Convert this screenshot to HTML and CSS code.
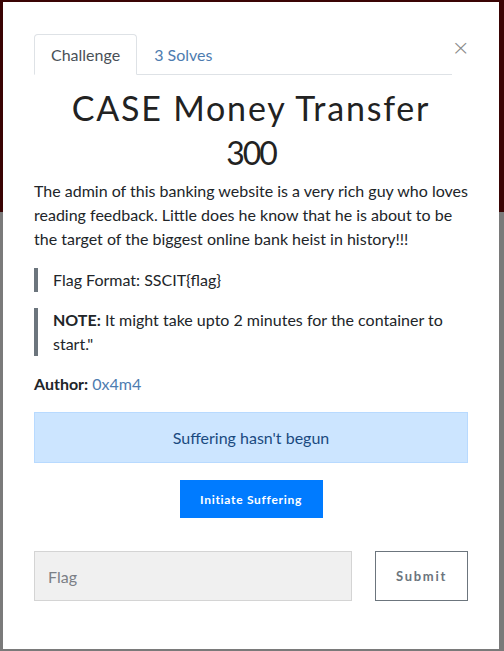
FILE: index.html
```html
<!DOCTYPE html>
<html>
<head>
<meta charset="utf-8">
<link rel="stylesheet" href="styles.css">
</head>
<body>
<div class="modal">
  <div class="header">
    <ul class="tabs">
      <li class="tab active">Challenge</li>
      <li class="tab">3 Solves</li>
    </ul>
    <span class="close">&times;</span>
  </div>
  <h2 class="title">CASE Money Transfer</h2>
  <h3 class="value">300</h3>
  <p class="desc">The admin of this banking website is a very rich guy who loves reading feedback. Little does he know that he is about to be the target of the biggest online bank heist in history!!!</p>
  <blockquote class="quote">Flag Format: SSCIT{flag}</blockquote>
  <blockquote class="quote"><strong>NOTE:</strong> It might take upto 2 minutes for the container to start."</blockquote>
  <p class="author"><strong>Author:</strong> <a class="link">0x4m4</a></p>
  <div class="alert">Suffering hasn't begun</div>
  <div class="btn-row"><button class="btn-primary">Initiate Suffering</button></div>
  <div class="submit-row">
    <input class="flag" type="text" placeholder="Flag">
    <button class="btn-submit">Submit</button>
  </div>
</div>
</body>
</html>
```
FILE: styles.css
```css
html, body { margin: 0; padding: 0; }
body {
  height: 651px;
  overflow: hidden;
  background: linear-gradient(#3a0404 0, #3a0404 212px, #7a7a7a 212px);
  font-family: Lato, "Liberation Sans", sans-serif;
  color: #212529;
}
.modal {
  margin: 2px 5px 0 3px;
  height: 647px;
  box-sizing: border-box;
  background: #fff;
  padding: 32px 31px 0 31px;
}
.header {
  display: flex;
  align-items: flex-start;
}
.tabs {
  list-style: none;
  margin: 0;
  padding: 0;
  display: flex;
  width: 419px;
  border-bottom: 1px solid #dee2e6;
}
.tab {
  font-size: 16px;
  line-height: 23px;
  padding: 8px 16px 8px 16px;
  border: 1px solid transparent;
  border-top-left-radius: 4px;
  border-top-right-radius: 4px;
  margin-bottom: -1px;
  color: #4d7cb0;
}
.tab.active {
  color: #495057;
  border-color: #dee2e6 #dee2e6 #fff;
  background: #fff;
}
.close {
  margin-left: auto;
  margin-top: 4px;
  margin-right: -2px;
  font-size: 22px;
  line-height: 20px;
  color: #8a8a8a;
  font-family: "DejaVu Sans", sans-serif;
  font-weight: 300;
}
.title {
  margin: 14px 0 0;
  text-align: center;
  font-weight: 400;
  font-size: 34px;
  line-height: 38px;
  letter-spacing: 1.8px;
  color: #222;
}
.value {
  margin: 7px 0 0;
  text-align: center;
  font-weight: 400;
  font-size: 32px;
  line-height: 38px;
  letter-spacing: -2px;
  color: #222;
}
.desc {
  margin: 7px 0 0;
  font-size: 16px;
  line-height: 24px;
}
.quote {
  margin: 17px 0 0;
  padding: 0 0 0 15px;
  border-left: 4px solid #6c757d;
  font-size: 16px;
  line-height: 24px;
}
.quote + .quote { margin-top: 16px; }
.author {
  margin: 16px 0 0;
  font-size: 16px;
  line-height: 24px;
}
.link { color: #4d7cb0; }
.alert {
  margin-top: 16px;
  height: 51px;
  box-sizing: border-box;
  background: #cce5ff;
  border: 1px solid #b8daff;
  color: #1a4a80;
  font-size: 16px;
  display: flex;
  align-items: center;
  justify-content: center;
}
.btn-row {
  display: flex;
  justify-content: center;
  margin-top: 17px;
}
.btn-primary {
  width: 143px;
  height: 38px;
  border: 0;
  background: #007bff;
  color: #fff;
  font-family: Lato, sans-serif;
  font-weight: 700;
  font-size: 12px;
  letter-spacing: 0.7px;
}
.submit-row {
  display: flex;
  justify-content: space-between;
  margin-top: 33px;
}
.flag {
  width: 318px;
  height: 50px;
  box-sizing: border-box;
  background: #f0f0f0;
  border: 1px solid #d4d4d4;
  padding: 0 13px;
  font-family: Lato, sans-serif;
  font-size: 16px;
  outline: none;
}
.flag::placeholder { color: #7b7f86; }
.btn-submit {
  width: 93px;
  height: 50px;
  background: #fff;
  border: 1px solid #6c757d;
  color: #6c757d;
  font-family: Lato, sans-serif;
  font-weight: 700;
  font-size: 13px;
  letter-spacing: 1.7px;
}
```
